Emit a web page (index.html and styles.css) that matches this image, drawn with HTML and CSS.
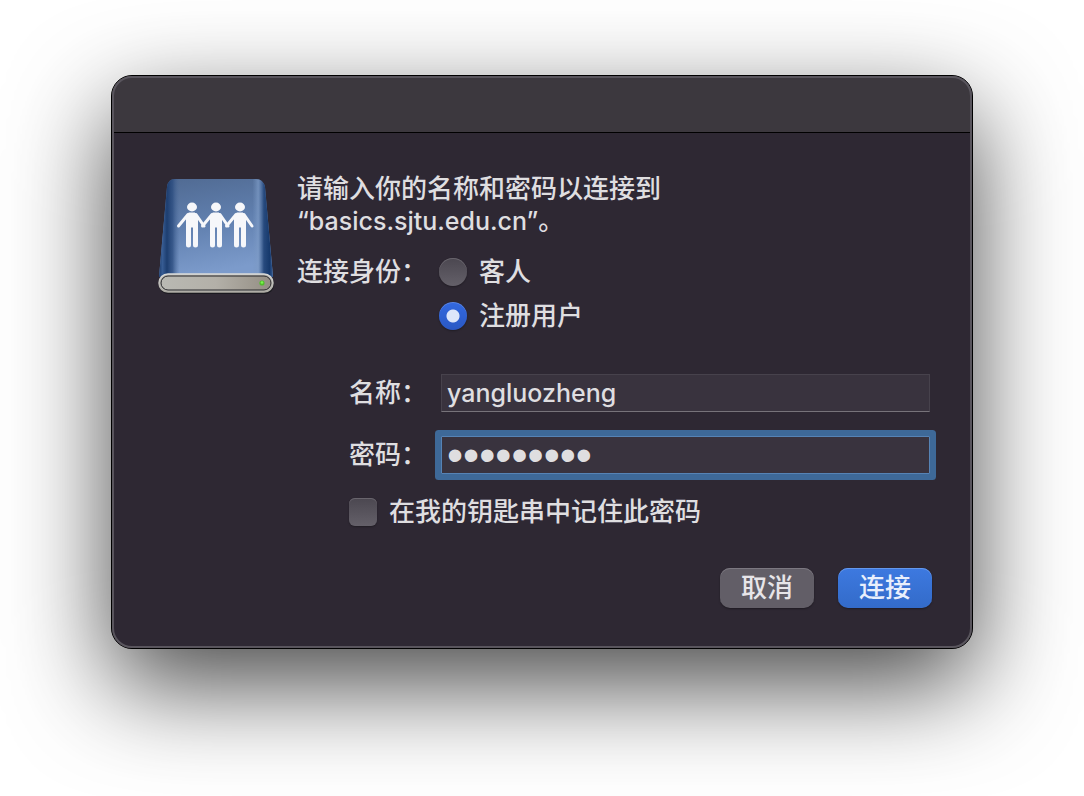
FILE: index.html
```html
<!DOCTYPE html>
<html lang="zh-CN">
<head>
  <meta charset="UTF-8">
  <meta name="viewport" content="width=device-width, initial-scale=1.0">
  <title>连接到服务器</title>
  <link rel="stylesheet" href="styles.css">
</head>
<body>
  <main class="window" role="dialog" aria-labelledby="message">
    <header class="titlebar"></header>

    <form class="content" onsubmit="return false">
      <svg class="drive-icon" viewBox="0 0 116 118" aria-hidden="true">
        <defs>
          <linearGradient id="side" x1="0" x2="1" y1="0" y2="0">
            <stop offset="0" stop-color="#1d3e70"/>
            <stop offset=".03" stop-color="#375c93"/>
            <stop offset=".07" stop-color="#1d3e70"/>
            <stop offset=".12" stop-color="#2c4d80" stop-opacity=".8"/>
            <stop offset=".18" stop-color="#4a6999" stop-opacity="0"/>
            <stop offset=".82" stop-color="#7796c2" stop-opacity="0"/>
            <stop offset=".87" stop-color="#7d9bc6" stop-opacity=".7"/>
            <stop offset=".92" stop-color="#274a7e"/>
            <stop offset=".97" stop-color="#16396c"/>
            <stop offset="1" stop-color="#365c94"/>
          </linearGradient>
          <linearGradient id="top" x1="0" x2=".2" y1="0" y2="1">
            <stop offset="0" stop-color="#506a92"/>
            <stop offset=".5" stop-color="#607fae"/>
            <stop offset="1" stop-color="#7c9bcb"/>
          </linearGradient>
          <linearGradient id="metal" x1="0" x2="1" y1="0" y2="0">
            <stop offset="0" stop-color="#b9b9b3"/>
            <stop offset=".5" stop-color="#b3b0a8"/>
            <stop offset="1" stop-color="#948e84"/>
          </linearGradient>
          <linearGradient id="rim" x1="0" x2="0" y1="0" y2="1">
            <stop offset="0" stop-color="#d9dad8"/>
            <stop offset="1" stop-color="#aaa8a1"/>
          </linearGradient>
        </defs>
        <path d="M17 2H98Q105 2 107 10L115 100H1L9 10Q10 2 17 2Z" fill="url(#top)"/>
        <path d="M17 2H98Q105 2 107 10L115 100H1L9 10Q10 2 17 2Z" fill="url(#side)"/>
        <rect x="1" y="98" width="115" height="19" rx="9" fill="#1b1a20"/>
        <rect x="1" y="97" width="114" height="18" rx="9" fill="#b9b8b2" stroke="url(#rim)" stroke-width="1.500"/>
        <rect x="3" y="99" width="110" height="14" rx="7" fill="url(#metal)" stroke="#27272a"/>
        <circle cx="104" cy="106" r="2.6" fill="#51bd2c"/>
        <circle cx="104" cy="105.5" r="1.3" fill="#7cf54f"/>
        <g fill="#f6f7fa" stroke="#f6f7fa" stroke-linejoin="round" stroke-linecap="round">
          <g id="person">
            <ellipse cx="34" cy="30" rx="5" ry="4.4" stroke="none"/>
            <path d="M31 36H37L39.500 39V50H28.500V39Z" stroke-width="1"/>
            <path d="M30 37.500L20.500 49M38 37.500L46 49" fill="none" stroke-width="3"/>
            <path d="M28 48H33V68Q33 70.500 30.500 70.500Q28 70.500 28 68ZM35 48H40V68Q40 70.500 37.500 70.500Q35 70.500 35 68Z" stroke="none"/>
          </g>
          <use href="#person" x="24"/>
          <use href="#person" x="48"/>
        </g>
      </svg>

      <div class="form">
        <p class="message" id="message">请输入你的名称和密码以连接到<br><span class="server">“basics.sjtu.edu.cn”</span>。</p>

        <div class="identity" role="radiogroup" aria-labelledby="identity-label">
          <span class="identity-label" id="identity-label">连接身份：</span>
          <div class="options">
            <label class="option"><input class="radio" type="radio" name="identity" value="guest">客人</label>
            <label class="option"><input class="radio" type="radio" name="identity" value="user" checked>注册用户</label>
          </div>
        </div>

        <div class="fields">
          <div class="field">
            <label class="field-label" for="username">名称：</label>
            <input class="field-input" type="text" id="username" value="yangluozheng" spellcheck="false">
          </div>
          <div class="field">
            <label class="field-label" for="password">密码：</label>
            <input class="field-input password focused" type="password" id="password" value="000000000">
          </div>
        </div>

        <label class="option remember"><input class="checkbox" type="checkbox">在我的钥匙串中记住此密码</label>
      </div>

      <div class="actions">
        <button class="btn" type="button">取消</button>
        <button class="btn btn-primary" type="submit">连接</button>
      </div>
    </form>
  </main>
</body>
</html>
```
FILE: styles.css
```css
:root {
  --color-window: #2e2833;
  --color-titlebar: #3c383e;
  --color-edge: #59555d;
  --color-text: #dfdee0;
  --color-input: #39333e;
  --color-ring: #3e6998;
}

* {
  margin: 0;
  padding: 0;
  box-sizing: border-box;
}

body {
  min-height: 100vh;
  background: #fff;
  color: var(--color-text);
  font: 500 26px/32px Inter, "Noto Sans CJK SC", sans-serif;
  padding: 75px 111px;
}

.window {
  position: relative;
  min-width: 720px;
  background: var(--color-window);
  border: 1px solid #000;
  border-radius: 21px;
  box-shadow: 0 36px 100px rgba(0, 0, 0, .72);
}

/* light inner edge, drawn over the title bar too */
.window::after {
  content: "";
  position: absolute;
  inset: 0;
  border: 2px solid var(--color-edge);
  border-radius: 20px;
  pointer-events: none;
}

.titlebar {
  height: 57px;
  background: var(--color-titlebar);
  border-bottom: 1px solid #000;
  border-radius: 20px 20px 0 0;
}

.content {
  display: grid;
  grid-template-columns: 116px minmax(0, 1fr);
  column-gap: 23px;
  row-gap: 40px;
  padding: 40px 40px 40px 46px;
}

.drive-icon {
  width: 116px;
  height: 118px;
  margin-top: 4px;
}

.form {
  padding-right: 2px;
}

.server {
  font-size: 25px;
}

.identity {
  display: flex;
  margin-top: 19px;
}

.identity-label {
  width: 142px;
}

.options {
  display: flex;
  flex-direction: column;
  gap: 12px;
}

.option {
  display: flex;
  align-items: center;
  gap: 12px;
}

.radio,
.checkbox {
  appearance: none;
  width: 28px;
  height: 28px;
  background: linear-gradient(#4b4750, #646069);
  box-shadow: inset 0 1px 0 #69656d, 0 1px 2px rgba(0, 0, 0, .3);
}

.radio {
  border-radius: 50%;
}

.radio:checked {
  background: radial-gradient(circle, #dde6fa 6px, transparent 7px), linear-gradient(#3369df, #2a58c4);
  box-shadow: inset 0 1px 0 #5c87e4, 0 1px 2px rgba(0, 0, 0, .3);
}

.checkbox {
  border-radius: 6px;
}

.fields {
  display: flex;
  flex-direction: column;
  gap: 24px;
  margin-top: 42px;
  padding-left: 52px;
}

.field {
  display: flex;
  align-items: center;
}

.field-label {
  width: 92px;
}

.field-input {
  flex: 1;
  min-width: 0;
  height: 38px;
  padding: 0 5px;
  background: var(--color-input);
  border: 1px solid #47424c;
  border-bottom-color: #77737a;
  color: var(--color-text);
  font: 500 25px/32px Inter, "Noto Sans CJK SC", sans-serif;
  outline: none;
}

.field-input.password {
  font: 46px/36px "Liberation Sans", sans-serif;
}

.field-input.focused {
  border-color: #5683b5;
  border-radius: 1px;
  box-shadow: 0 0 0 6px var(--color-ring);
}

.remember {
  margin-top: 22px;
  padding-left: 52px;
}

.actions {
  grid-column: 1 / -1;
  display: flex;
  justify-content: flex-end;
  gap: 24px;
}

.btn {
  width: 94px;
  height: 40px;
  background: #625e67;
  border: none;
  border-radius: 10px;
  box-shadow: inset 0 1px 0 #7c7881, 0 1px 2px rgba(0, 0, 0, .35);
  color: #e7e5e9;
  font: inherit;
}

.btn-primary {
  background: linear-gradient(#3d79e0, #336bc9);
  box-shadow: inset 0 1px 0 #6498ed, 0 1px 2px rgba(0, 0, 0, .35);
  color: #e9effc;
}
```
